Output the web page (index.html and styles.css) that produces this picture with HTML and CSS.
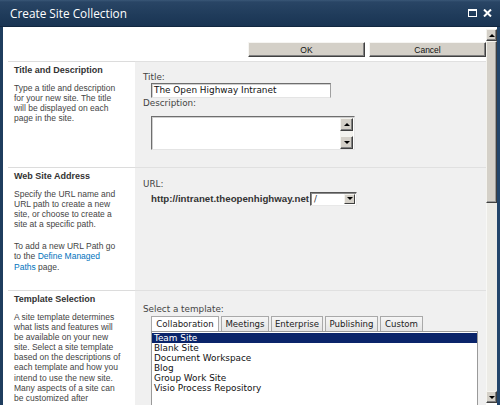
FILE: index.html
```html
<!DOCTYPE html>
<html>
<head>
<meta charset="utf-8">
<link rel="stylesheet" href="styles.css">
</head>
<body>
<div class="window">
  <div class="titlebar">
    <span class="title">Create Site Collection</span>
    <span class="ctrls">
      <svg class="ico" width="9" height="8" viewBox="0 0 9 8"><rect x="0.5" y="0.5" width="8" height="7" fill="none" stroke="#fff" stroke-width="1"/><rect x="0" y="0" width="9" height="2" fill="#fff"/></svg>
      <svg class="ico" width="9" height="8" viewBox="0 0 9 8"><path d="M1 0.5 L8 7.5 M8 0.5 L1 7.5" stroke="#fff" stroke-width="2"/></svg>
    </span>
  </div>
  <div class="frame">
    <div class="content">
      <div class="btnrow">
        <div class="btn">OK</div>
        <div class="btn">Cancel</div>
      </div>

      <div class="section s1">
        <div class="left">
          <h3>Title and Description</h3>
          <p>Type a title and description<br>for your new site. The title<br>will be displayed on each<br>page in the site.</p>
        </div>
        <div class="right">
          <div class="label first1">Title:</div>
          <div class="textbox">The Open Highway Intranet</div>
          <div class="label">Description:</div>
          <div class="textarea">
            <div class="ta-scroll">
              <div class="sbtn"><span class="arr up"></span></div>
              <div class="ta-track"></div>
              <div class="sbtn"><span class="arr down"></span></div>
            </div>
          </div>
        </div>
      </div>

      <div class="section s2">
        <div class="left">
          <h3>Web Site Address</h3>
          <p>Specify the URL name and<br>URL path to create a new<br>site, or choose to create a<br>site at a specific path.</p>
          <p class="para">To add a new URL Path go<br>to the <a class="link">Define Managed</a><br><a class="link">Paths</a> page.</p>
        </div>
        <div class="right">
          <div class="label first2">URL:</div>
          <div class="urlrow">
            <span class="urltext">http://intranet.theopenhighway.net</span>
            <div class="select"><span class="selval">/</span><div class="selbtn"><span class="arr down"></span></div></div>
          </div>
        </div>
      </div>

      <div class="section s3">
        <div class="left">
          <h3>Template Selection</h3>
          <p>A site template determines<br>what lists and features will<br>be available on your new<br>site. Select a site template<br>based on the descriptions of<br>each template and how you<br>intend to use the new site.<br>Many aspects of a site can<br>be customized after</p>
        </div>
        <div class="right">
          <div class="label first3">Select a template:</div>
          <div class="tabs">
            <div class="tab sel t1">Collaboration</div>
            <div class="tab t2">Meetings</div>
            <div class="tab t3">Enterprise</div>
            <div class="tab t4">Publishing</div>
            <div class="tab t5">Custom</div>
          </div>
          <div class="listbox">
            <div class="item selected">Team Site</div>
            <div class="item">Blank Site</div>
            <div class="item">Document Workspace</div>
            <div class="item">Blog</div>
            <div class="item">Group Work Site</div>
            <div class="item">Visio Process Repository</div>
          </div>
        </div>
      </div>
    </div>
    <div class="vscroll">
      <div class="vbtn"><span class="arr up"></span></div>
      <div class="vthumb"></div>
      <div class="vtrack"></div>
      <div class="vbtn"><span class="arr down"></span></div>
    </div>
  </div>
</div>
</body>
</html>
```

FILE: styles.css
```css
* { box-sizing: border-box; }
html, body { margin: 0; padding: 0; }
body {
  width: 500px;
  height: 405px;
  overflow: hidden;
  background: #1f3d5e;
  font-family: "Liberation Sans", Arial, sans-serif;
}
.window {
  width: 500px;
  height: 405px;
  display: flex;
  flex-direction: column;
}
.titlebar {
  height: 27px;
  flex: none;
  background: linear-gradient(#3a5777 0px, #294565 2px, #1f3b5a 60%, #1a3453 100%);
  border-bottom: 1px solid #122740;
  display: flex;
  align-items: center;
  padding-left: 10px;
  color: #fff;
}
.title {
  flex: 1;
  font-family: "Open Sans", "Liberation Sans", sans-serif;
  font-size: 11.8px;
  margin-top: -1px;
}
.ctrls {
  display: flex;
  gap: 6px;
  margin-right: 8px;
  margin-top: -1px;
}
.ico { display: block; }

.frame {
  flex: 1;
  min-height: 0;
  display: flex;
  border-left: 3px solid #1f3d5e;
  border-right: 3px solid #23456a;
  background: #fff;
}
.content {
  flex: 1;
  min-width: 0;
  overflow: hidden;
}

.btnrow {
  display: flex;
  justify-content: flex-end;
  gap: 4px;
  padding-top: 15px;
  height: 34px;
}
.btn {
  width: 117px;
  height: 15px;
  background: #d4d0c8;
  border: 1px solid;
  border-color: #f6f5f2 #404040 #404040 #f6f5f2;
  box-shadow: inset -1px -1px 0 #808080;
  font-family: "Liberation Sans", Arial, sans-serif;
  font-size: 8.5px;
  color: #111;
  display: flex;
  align-items: center;
  justify-content: center;
}

.section {
  display: grid;
  grid-template-columns: 127px 1fr;
  margin-left: 5px;
}
.s1 { height: 106px; }
.s2 { height: 123px; }
.s3 { height: 200px; }
.left {
  border-top: 1px solid #dcdcdc;
  padding: 3px 4px 0 6px;
}
.right {
  background: #f0f0f0;
  border-top: 1px solid #e0e0e0;
  padding-left: 8px;
}
h3 {
  margin: 0 0 7px 0;
  font-size: 9px;
  line-height: 11px;
  font-weight: bold;
  color: #333;
}
.left p {
  margin: 0;
  font-size: 8.5px;
  line-height: 10.1px;
  color: #444;
}
.left p.para { margin-top: 12px; }
.link { color: #0072bc; }

.label {
  font-family: "DejaVu Sans", Verdana, sans-serif;
  font-size: 8.8px;
  line-height: 11px;
  color: #444;
}
.first1 { margin-top: 10px; }
.first2 { margin-top: 10.5px; }
.first3 { margin-top: 12.5px; }

.textbox {
  margin: 0 0 0 8px;
  width: 180px;
  height: 15px;
  background: #fff;
  border: 1px solid;
  border-color: #6e6e6e #a0a0a0 #e4e4e4 #6e6e6e;
  box-shadow: inset 1px 1px 0 #cfcfcf;
  font-family: "DejaVu Sans", Verdana, sans-serif;
  font-size: 8.9px;
  line-height: 12px;
  padding-left: 2px;
  color: #111;
  white-space: nowrap;
}
.textarea {
  margin: 7px 0 0 8px;
  width: 204px;
  height: 34px;
  background: #fff;
  border: 1px solid;
  border-color: #6e6e6e #e4e4e4 #e4e4e4 #6e6e6e;
  box-shadow: inset 1px 1px 0 #cfcfcf;
  display: flex;
  justify-content: flex-end;
  padding: 1px 1px 0 0;
}
.ta-scroll {
  width: 13px;
  display: flex;
  flex-direction: column;
}
.ta-track { flex: 1; background: #f3f2ee; }
.sbtn, .vbtn {
  height: 13px;
  flex: none;
  background: #d4d0c8;
  border: 1px solid;
  border-color: #f4f3ee #404040 #404040 #f4f3ee;
  box-shadow: inset -1px -1px 0 #808080;
  display: flex;
  align-items: center;
  justify-content: center;
}
.arr {
  width: 0;
  height: 0;
  border-left: 3px solid transparent;
  border-right: 3px solid transparent;
}
.arr.up { border-bottom: 3px solid #000; }
.arr.down { border-top: 3px solid #000; }

.urlrow {
  display: flex;
  align-items: center;
  margin: 2px 0 0 8px;
}
.urltext {
  font-family: "Liberation Sans", Arial, sans-serif;
  font-weight: bold;
  font-size: 9.7px;
  color: #333;
  width: 159px;
  white-space: nowrap;
}
.select {
  width: 47px;
  height: 14px;
  background: #fff;
  border: 1px solid;
  border-color: #555 #e8e8e8 #e8e8e8 #555;
  box-shadow: inset 1px 1px 0 #8a8a8a;
  display: flex;
  align-items: center;
  padding: 1px 1px 1px 3px;
}
.selval {
  flex: 1;
  font-family: "DejaVu Sans", sans-serif;
  font-size: 8.8px;
  color: #333;
  line-height: 10px;
}
.selbtn {
  width: 11px;
  height: 10px;
  background: #d4d0c8;
  border: 1px solid;
  border-color: #f4f3ee #404040 #404040 #f4f3ee;
  display: flex;
  align-items: center;
  justify-content: center;
}

.tabs {
  display: flex;
  gap: 2px;
  margin: 1.5px 0 0 8px;
  height: 15px;
}
.tab {
  height: 15px;
  border: 1px solid #a9a9a9;
  border-bottom: none;
  background: linear-gradient(#f6f6f6, #e4e4e4);
  font-family: "DejaVu Sans", Verdana, sans-serif;
  font-size: 8.6px;
  line-height: 14px;
  color: #222;
  text-align: center;
  white-space: nowrap;
}
.tab.sel { background: #fff; }
.t1 { width: 68px; }
.t2 { width: 48px; }
.t3 { width: 52px; }
.t4 { width: 53px; }
.t5 { width: 43px; }

.listbox {
  margin-left: 8px;
  width: 327px;
  height: 80px;
  background: #fff;
  border: 1px solid #9a9a9a;
  padding-top: 1px;
}
.item {
  font-family: "DejaVu Sans", Verdana, sans-serif;
  font-size: 8.9px;
  line-height: 10.1px;
  color: #111;
  padding-left: 2px;
  white-space: nowrap;
}
.item.selected {
  background: #0a246a;
  color: #fff;
}

.vscroll {
  width: 11px;
  flex: none;
  margin-top: 2px;
  margin-bottom: 2px;
  display: flex;
  flex-direction: column;
  background: #ecebe6;
}
.vbtn { height: 12px; width: 11px; }
.vthumb {
  height: 162px;
  background: #d4d0c8;
  border: 1px solid;
  border-color: #f4f3ee #404040 #404040 #f4f3ee;
  box-shadow: inset -1px -1px 0 #9a9a9a;
}
.vtrack {
  flex: 1;
  background: #ecebe6;
  border-left: 1px solid #f8f8f6;
}
```
